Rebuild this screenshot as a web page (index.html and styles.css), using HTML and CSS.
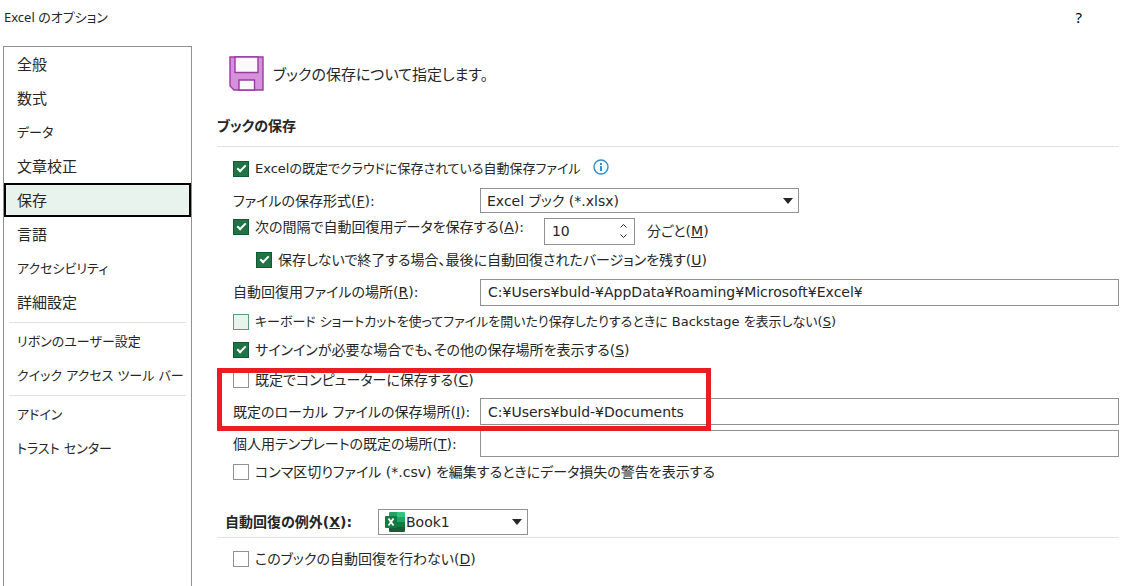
FILE: index.html
```html
<!DOCTYPE html>
<html lang="ja">
<head>
<meta charset="utf-8">
<title>Excel のオプション</title>
<link rel="stylesheet" href="styles.css">
</head>
<body>
<div class="dialog">
  <header class="titlebar">
    <h1 class="title">Excel のオプション</h1>
    <button class="help" type="button" aria-label="ヘルプ">?</button>
  </header>
  <div class="body">
    <nav class="sidebar">
      <button type="button" class="nav-item">全般</button>
      <button type="button" class="nav-item">数式</button>
      <button type="button" class="nav-item compact">データ</button>
      <button type="button" class="nav-item">文章校正</button>
      <button type="button" class="nav-item selected" aria-current="page">保存</button>
      <button type="button" class="nav-item">言語</button>
      <button type="button" class="nav-item compact">アクセシビリティ</button>
      <button type="button" class="nav-item">詳細設定</button>
      <hr class="nav-rule">
      <button type="button" class="nav-item compact">リボンのユーザー設定</button>
      <button type="button" class="nav-item compact">クイック アクセス ツール バー</button>
      <hr class="nav-rule">
      <button type="button" class="nav-item compact">アドイン</button>
      <button type="button" class="nav-item compact">トラスト センター</button>
    </nav>
    <main class="content">
      <div class="intro">
        <svg class="disk" width="36" height="36" viewBox="0 0 36 36" aria-hidden="true">
          <path d="M1 2h33v33H5L1 31z" fill="#d592da" stroke="#9a3aa3" stroke-width="1.400"/>
          <path d="M6 2h23v15.500H6zM10 35v-10h15.500v10z" fill="#fafafa" stroke="#9a3aa3" stroke-width="1.400"/>
        </svg>
        <p class="lead">ブックの保存について指定します。</p>
      </div>
      <h2 class="section">ブックの保存</h2>
      <div class="settings">
        <div class="row">
          <label class="check compact"><input type="checkbox" checked>Excelの既定でクラウドに保存されている自動保存ファイル</label>
          <button class="info" type="button" aria-label="情報">
            <svg width="16" height="16" viewBox="0 0 16 16"><circle cx="8" cy="8" r="7" fill="none" stroke="#2b8fd0" stroke-width="1.400"/><path d="M7 4h2v2H7zM7 7h2v5H7z" fill="#2b8fd0"/></svg>
          </button>
        </div>
        <div class="row">
          <label class="name" for="format">ファイルの保存形式(<u>F</u>):</label>
          <span class="picker format">
            <select id="format"><option>Excel ブック (*.xlsx)</option></select>
            <svg class="arrow" width="10" height="6" viewBox="0 0 10 6"><path d="M0 0h10L5 6z"/></svg>
          </span>
        </div>
        <div class="row interval">
          <label class="check"><input type="checkbox" checked><span>次の間隔で自動回復用データを保存する(<u>A</u>):</span></label>
          <span class="spinner">
            <input type="text" id="minutes" value="10">
            <span class="steps">
              <button type="button" aria-label="増やす"><svg width="7" height="4" viewBox="0 0 7 4"><path d="M.5 3.500l3-3 3 3"/></svg></button>
              <button type="button" aria-label="減らす"><svg width="7" height="4" viewBox="0 0 7 4"><path d="M.5.5l3 3 3-3"/></svg></button>
            </span>
          </span>
          <label class="unit" for="minutes">分ごと(<u>M</u>)</label>
        </div>
        <div class="row nested">
          <label class="check"><input type="checkbox" checked><span>保存しないで終了する場合、最後に自動回復されたバージョンを残す(<u>U</u>)</span></label>
        </div>
        <div class="row">
          <label class="name" for="recovery">自動回復用ファイルの場所(<u>R</u>):</label>
          <input class="path" type="text" id="recovery" value="C:¥Users¥buld-¥AppData¥Roaming¥Microsoft¥Excel¥">
        </div>
        <div class="row">
          <label class="check compact"><input class="hover" type="checkbox"><span>キーボード ショートカットを使ってファイルを開いたり保存したりするときに Backstage を表示しない(<u>S</u>)</span></label>
        </div>
        <div class="row">
          <label class="check"><input type="checkbox" checked><span>サインインが必要な場合でも、その他の保存場所を表示する(<u>S</u>)</span></label>
        </div>
        <div class="marked">
          <div class="row">
            <label class="check"><input type="checkbox"><span>既定でコンピューターに保存する(<u>C</u>)</span></label>
          </div>
          <div class="row">
            <label class="name" for="local">既定のローカル ファイルの保存場所(<u>I</u>):</label>
            <input class="path" type="text" id="local" value="C:¥Users¥buld-¥Documents">
          </div>
        </div>
        <div class="row">
          <label class="name" for="template">個人用テンプレートの既定の場所(<u>T</u>):</label>
          <input class="path" type="text" id="template">
        </div>
        <div class="row">
          <label class="check"><input type="checkbox"><span>コンマ区切りファイル (*.csv) を編集するときにデータ損失の警告を表示する</span></label>
        </div>
      </div>
      <div class="exceptions">
        <label class="exceptions-name" for="book">自動回復の例外(<u>X</u>):</label>
        <span class="picker book">
          <svg class="excel" width="20" height="20" viewBox="0 0 20 20" aria-hidden="true">
            <path d="M4 1h8v9H4z" fill="#21a366"/><path d="M12 0h7a1 1 0 0 1 1 1v4h-8z" fill="#33c481"/>
            <path d="M4 1a1 1 0 0 1 1-1h7v5H4z" fill="#21a366"/>
            <path d="M4 5h8v5H4z" fill="#107c41"/><path d="M12 5h8v5h-8z" fill="#21a366"/>
            <path d="M4 10h8v5H4z" fill="#185c37"/><path d="M12 10h8v5h-8z" fill="#107c41"/>
            <path d="M4 15h16v4a1 1 0 0 1-1 1H5a1 1 0 0 1-1-1z" fill="#185c37"/>
            <rect y="4" width="12" height="12" rx="1" fill="#107c41"/>
            <path d="M3.500 6.500l5 7M8.500 6.500l-5 7" stroke="#fff" stroke-width="1.900"/>
          </svg>
          <select id="book"><option>Book1</option></select>
          <svg class="arrow" width="10" height="6" viewBox="0 0 10 6"><path d="M0 0h10L5 6z"/></svg>
        </span>
      </div>
      <div class="row last">
        <label class="check"><input type="checkbox"><span>このブックの自動回復を行わない(<u>D</u>)</span></label>
      </div>
    </main>
  </div>
</div>
</body>
</html>
```
FILE: styles.css
```css
*, *::before, *::after { box-sizing: border-box; }

body {
  margin: 0;
  background: #fff;
  color: #262626;
  font: 14px/20px "DejaVu Sans", "Noto Sans CJK JP", sans-serif;
  font-feature-settings: "palt";
}

button, input, select {
  margin: 0;
  padding: 0;
  border: 0;
  border-radius: 0;
  background: none;
  color: inherit;
  font: inherit;
  font-feature-settings: inherit;
}

.dialog {
  display: flex;
  flex-direction: column;
  height: 100vh;
  overflow: hidden;
}

.titlebar {
  display: flex;
  flex: none;
  justify-content: space-between;
  align-items: center;
  height: 46px;
  padding: 0 40px 12px 4px;
  font-family: "Noto Sans", "Noto Sans CJK JP", sans-serif;
}

.title { margin: 0; font-size: 13px; font-weight: 400; }
.help { color: #000; font-size: 15px; }

.body { display: flex; flex: 1; min-height: 0; padding-left: 3px; }

.sidebar {
  display: flex;
  flex: none;
  flex-direction: column;
  width: 189px;
  border: 1px solid #919191;
  border-bottom: 0;
}

.nav-item {
  flex: none;
  height: 34px;
  padding: 2px 13px 0;
  font-size: 15px;
  text-align: left;
  white-space: nowrap;
}

.nav-item.selected {
  padding: 2px 11px 0;
  border: 2px solid #000;
  background: #e9f3ee;
}

.compact, .nav-item.compact { font-size: 13px; }

.nav-rule {
  flex: none;
  width: auto;
  height: 1px;
  margin: 3px 5px 1px;
  border: 0;
  background: #e1e1e1;
}

.content { flex: 1; min-width: 0; padding: 9px 3px 0 25px; white-space: nowrap; }

.intro { display: flex; align-items: center; gap: 8px; padding-left: 12px; }
.disk { flex: none; }
.lead { margin: 4px 0 0; font-size: 15px; }

.section {
  margin: 0;
  padding: 25px 0 10px;
  border-bottom: 1px solid #e1e1e1;
  font-size: 14px;
  font-weight: 700;
}

.settings {
  display: grid;
  grid-template-rows: 31px 33px 28px 30px 34px 25px 31px 64px 29px 27px;
  margin-top: 6px;
}

.row { display: flex; align-items: center; padding-left: 16px; }
.nested { padding-left: 39px; }
.name { flex: none; width: 247px; }
.check { display: flex; align-items: center; gap: 6px; }
.interval .check { align-self: flex-start; }

.check input {
  flex: none;
  width: 16px;
  height: 16px;
  border: 1px solid #919191;
  appearance: none;
}

.check input.hover { border-color: #5a9e78; background: #e9f3ee; }

.check input:checked {
  display: grid;
  place-items: center;
  border-color: #0f5c33;
  background: #217346;
}

.check input:checked::before {
  width: 9px;
  height: 5px;
  margin-bottom: 3px;
  border: solid #fff;
  border-width: 0 0 2px 2px;
  content: "";
  transform: rotate(-45deg);
}

.info { display: flex; margin: 0 0 4px 12px; }

.picker { position: relative; display: flex; height: 25px; border: 1px solid #919191; }
.picker select { width: 100%; padding-left: 6px; appearance: none; }
.arrow { position: absolute; top: 9px; right: 5px; fill: #262626; pointer-events: none; }
.format { width: 319px; }

.spinner {
  display: flex;
  width: 91px;
  height: 27px;
  margin-left: 20px;
  border: 1px solid #919191;
}

.spinner input { flex: 1; min-width: 0; padding-left: 7px; }
.steps { display: flex; flex-direction: column; justify-content: space-evenly; padding: 0 7px; }
.steps button { display: flex; }
.steps path { fill: none; stroke: #262626; }
.unit { margin-left: 12px; }

.path { flex: 1; min-width: 0; height: 27px; padding: 0 7px; border: 1px solid #919191; }

.marked { position: relative; display: grid; grid-template-rows: 29px 35px; }

.marked::after {
  position: absolute;
  z-index: 1;
  top: 3px;
  bottom: -2px;
  left: 0;
  width: 494px;
  border: 5px solid #ed1c24;
  content: "";
  pointer-events: none;
}

.exceptions {
  display: flex;
  align-items: center;
  margin-top: 24px;
  padding: 0 0 2px 8px;
  border-bottom: 1px solid #e1e1e1;
}

.exceptions-name { width: 153px; font-weight: 700; }
.book { width: 150px; height: 26px; }
.book select { padding-left: 27px; }
.excel { position: absolute; top: 2px; left: 6px; pointer-events: none; }
.last { height: 42px; }
```
